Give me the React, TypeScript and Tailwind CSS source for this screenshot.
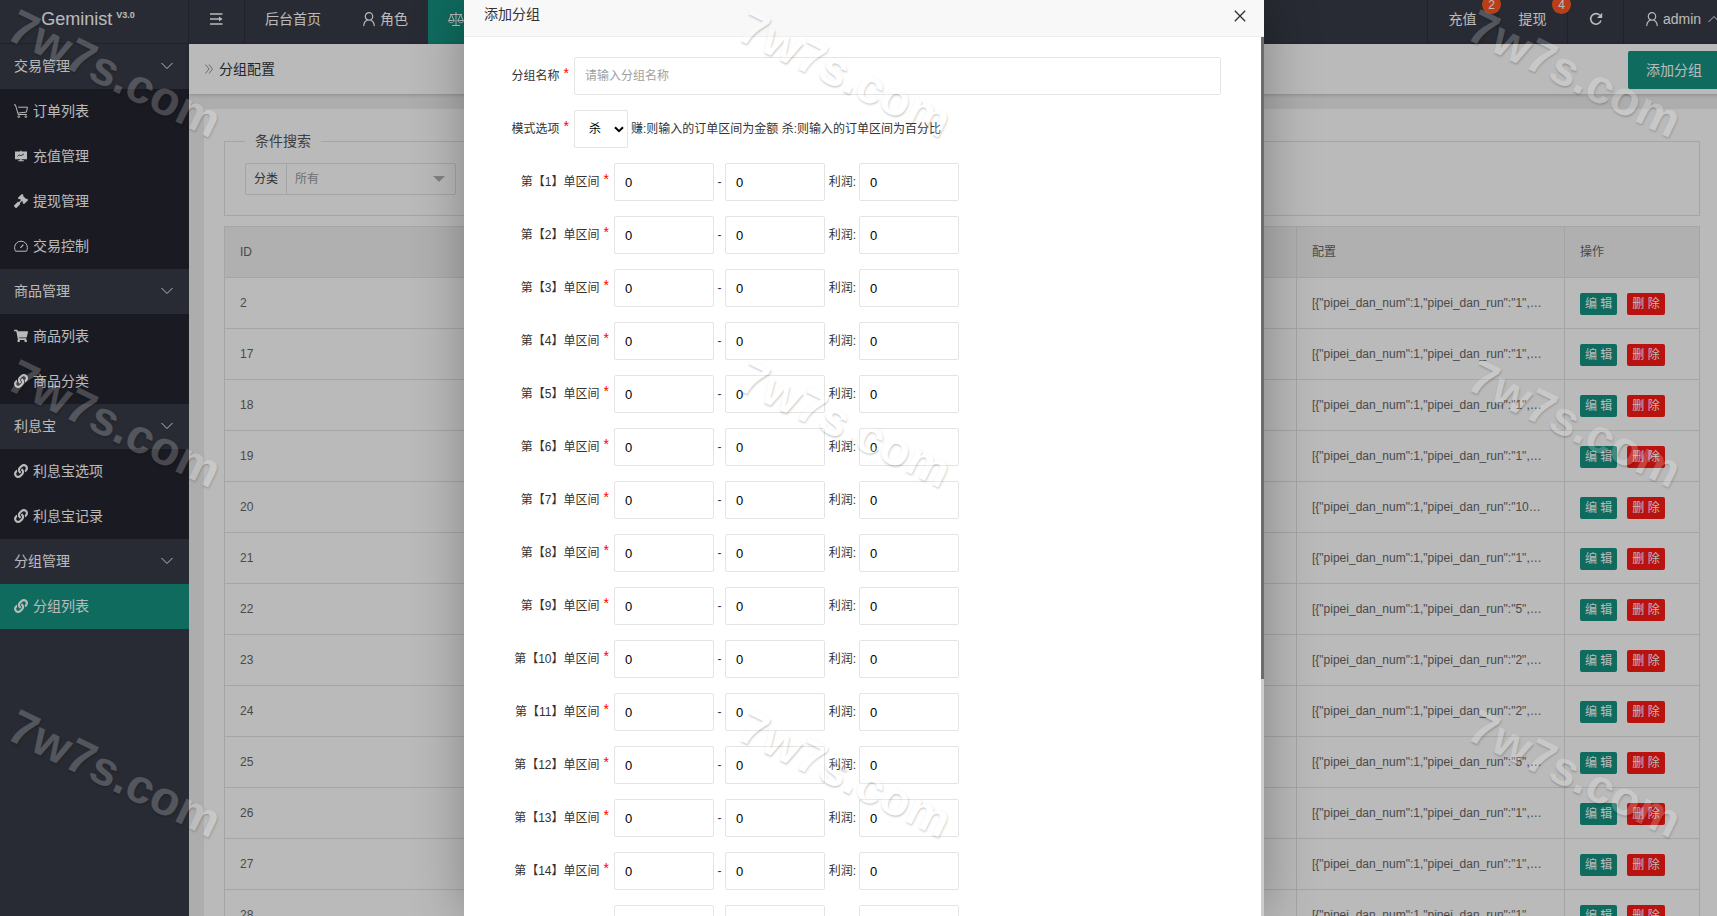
import { useState, type ReactNode } from 'react';
import { FaGavel, FaLink, FaShoppingCart } from 'react-icons/fa';

interface MenuItem {
  label: string;
  icon: ReactNode;
  active?: boolean;
}

interface MenuGroup {
  label: string;
  children: MenuItem[];
}

interface IconProps {
  className?: string;
}

const UserIcon = ({ className }: IconProps) => (
  <svg className={className} viewBox="0 0 16 16" fill="none" stroke="currentColor" strokeWidth="1.2">
    <circle cx="8" cy="5.4" r="3.7" />
    <path d="M2.8 14.6c0-3 1.6-4.6 3.4-5.6M13.2 14.6c0-3-1.6-4.6-3.4-5.6" strokeLinecap="round" />
  </svg>
);

const CartIcon = () => (
  <svg className="size-3.5" viewBox="0 0 14 14" fill="none" stroke="currentColor">
    <path d="M0 .8h1.400l2.800 9.700h8.600M4.200 3.200h9.300l-1.100 5-8 .8" />
    <circle cx="4.800" cy="12.600" r=".9" />
    <circle cx="11.800" cy="12.600" r=".9" />
  </svg>
);

const BoardIcon = () => (
  <svg className="size-3.5" viewBox="0 0 14 14" fill="currentColor">
    <path d="M1 2.600h5.300v-.8h1.400v.8H13v7.600H7.700v1h2.100v1H4.200v-1h2.100v-1H1z" />
    <path d="M3.400 7.200l2-1.300 1.600.8 3-1.700" fill="none" stroke="#24242f" strokeWidth=".8" />
  </svg>
);

const GaugeIcon = () => (
  <svg className="size-3.5" viewBox="0 0 14 14" fill="none" stroke="currentColor">
    <path d="M1.6 12.2C.8 11.2.6 10 .6 8.600a6.400 6.400 0 0 1 12.800 0c0 1.400-.2 2.600-1 3.600z" />
    <path d="M6.400 8.800l3-3.200" strokeWidth="1.200" />
  </svg>
);

const ScaleIcon = () => (
  <svg className="size-4" viewBox="0 0 16 16" fill="none" stroke="currentColor" strokeWidth="1">
    <path d="M8 1v13.500M4 14.500h8M2 3.500h12M3.400 3.500L.8 9.500M3.400 3.500L6 9.500M12.600 3.500L10 9.500M12.600 3.500l2.600 6" />
    <path d="M.6 9.500h5.600c-.2 1.500-1.200 2.200-2.800 2.200S.8 11 .6 9.500zM9.800 9.500h5.600c-.2 1.500-1.200 2.200-2.800 2.200s-2.600-.7-2.800-2.200z" />
  </svg>
);

const CollapseIcon = () => (
  <svg className="w-[13px] h-3" viewBox="0 0 13 12" fill="none" stroke="currentColor" strokeWidth="1.300">
    <path d="M0 1h12.500M0 6h10M0 11h12.500" />
    <path d="M9 3.600v4.800L12.600 6z" fill="currentColor" stroke="none" />
  </svg>
);

const RefreshIcon = () => (
  <svg className="size-3.5" viewBox="0 0 14 14" fill="none" stroke="currentColor" strokeWidth="1.600">
    <path d="M12 8.600A5.300 5.300 0 1 1 10.800 3.200" />
    <path d="M13.200.8v5.200H8z" fill="currentColor" stroke="none" />
  </svg>
);

const ChevronIcon = ({ className }: IconProps) => (
  <svg className={className} viewBox="0 0 12 8" fill="none" stroke="currentColor">
    <path d="M.5 1L6 6.500 11.500 1" />
  </svg>
);

const link = <FaLink className="size-3.5" />;

const menus: MenuGroup[] = [
  {
    label: '交易管理',
    children: [
      { label: '订单列表', icon: <CartIcon /> },
      { label: '充值管理', icon: <BoardIcon /> },
      { label: '提现管理', icon: <FaGavel className="size-3.5" /> },
      { label: '交易控制', icon: <GaugeIcon /> },
    ],
  },
  {
    label: '商品管理',
    children: [
      { label: '商品列表', icon: <FaShoppingCart className="size-3.5" /> },
      { label: '商品分类', icon: link },
    ],
  },
  {
    label: '利息宝',
    children: [
      { label: '利息宝选项', icon: link },
      { label: '利息宝记录', icon: link },
    ],
  },
  {
    label: '分组管理',
    children: [{ label: '分组列表', icon: link, active: true }],
  },
];

const rows = [
  { id: 2, config: '[{"pipei_dan_num":1,"pipei_dan_run":"1",…' },
  { id: 17, config: '[{"pipei_dan_num":1,"pipei_dan_run":"1",…' },
  { id: 18, config: '[{"pipei_dan_num":1,"pipei_dan_run":"1",…' },
  { id: 19, config: '[{"pipei_dan_num":1,"pipei_dan_run":"1",…' },
  { id: 20, config: '[{"pipei_dan_num":1,"pipei_dan_run":"10…' },
  { id: 21, config: '[{"pipei_dan_num":1,"pipei_dan_run":"1",…' },
  { id: 22, config: '[{"pipei_dan_num":1,"pipei_dan_run":"5",…' },
  { id: 23, config: '[{"pipei_dan_num":1,"pipei_dan_run":"2",…' },
  { id: 24, config: '[{"pipei_dan_num":1,"pipei_dan_run":"2",…' },
  { id: 25, config: '[{"pipei_dan_num":1,"pipei_dan_run":"5",…' },
  { id: 26, config: '[{"pipei_dan_num":1,"pipei_dan_run":"1",…' },
  { id: 27, config: '[{"pipei_dan_num":1,"pipei_dan_run":"1",…' },
  { id: 28, config: '[{"pipei_dan_num":1,"pipei_dan_run":"1",…' },
];

const intervals = Array.from({ length: 20 }, (_, i) => i + 1);

const Sidebar = () => (
  <aside className="w-[189px] shrink-0 bg-[#373b46] text-sm text-white">
    <div className="flex h-11 justify-center border-r border-b border-[#2c2f38] pr-3 pt-1.5 text-lg leading-[26px]">
      Geminist
      <sup className="ml-1 top-0 text-[9px] leading-[18px] font-bold">V3.0</sup>
    </div>
    <nav>
      {menus.map((group) => (
        <div key={group.label}>
          <button type="button" className="flex h-[45px] w-full items-center justify-between pb-0.5 pl-3.5 pr-4">
            {group.label}
            <ChevronIcon className="w-3 h-2" />
          </button>
          {group.children.map((item) => (
            <a
              key={item.label}
              href="#"
              className={`flex h-[45px] items-center gap-[5px] pb-0.5 pl-3.5 ${item.active ? 'bg-[#159382]' : 'bg-[#24242f]'}`}
            >
              {item.icon}
              {item.label}
            </a>
          ))}
        </div>
      ))}
    </nav>
  </aside>
);

const TopBar = () => (
  <header className="flex h-11 justify-between bg-[#373b46] text-sm text-white">
    <div className="flex">
      <button
        type="button"
        aria-label="菜单"
        className="flex w-14 items-center justify-center border-r border-[#2c2f38] pb-1.5"
      >
        <CollapseIcon />
      </button>
      <a href="#" className="flex items-center px-5 pb-1.5">
        后台首页
      </a>
      <a href="#" className="flex items-center gap-[3px] px-5 pb-1.5">
        <UserIcon className="size-4" />
        角色
      </a>
      <a href="#" className="flex items-center gap-[3px] bg-[#159382] px-5 pb-1.5">
        <ScaleIcon />
        交易
      </a>
    </div>
    <div className="flex">
      <a href="#" className="relative flex w-[70px] items-center justify-center border-l border-[#2c2f38] pb-1.5">
        充值
        <span className="absolute -top-[5px] -right-1 z-10 size-[19px] rounded-full bg-[#ff5722] text-center text-xs leading-5">
          2
        </span>
      </a>
      <a href="#" className="relative flex w-[70px] items-center justify-center border-l border-[#2c2f38] pb-1.5">
        提现
        <span className="absolute -top-[5px] -right-1 z-10 size-[19px] rounded-full bg-[#ff5722] text-center text-xs leading-5">
          4
        </span>
      </a>
      <button
        type="button"
        aria-label="刷新"
        className="flex w-14 items-center justify-center border-l border-[#2c2f38] pb-1.5"
      >
        <RefreshIcon />
      </button>
      <a href="#" className="flex w-28 items-center gap-[3px] border-l border-[#2c2f38] pl-5 pb-1.5">
        <UserIcon className="size-4" />
        admin
        <ChevronIcon className="ml-1 w-3 h-2 rotate-180" />
      </a>
    </div>
  </header>
);

const GroupTable = () => (
  <table className="mt-2.5 w-full table-fixed border-collapse text-left text-xs text-[#666]">
    <thead>
      <tr className="h-[51px] bg-[#f2f2f2]">
        <th className="border border-[#e2e2e2] px-[15px] font-normal">ID</th>
        <th className="border border-[#e2e2e2] px-[15px]" />
        <th className="w-[268px] border border-[#e2e2e2] px-[15px] font-normal">配置</th>
        <th className="w-[135px] border border-[#e2e2e2] px-[15px] font-normal">操作</th>
      </tr>
    </thead>
    <tbody>
      {rows.map((row) => (
        <tr key={row.id} className="h-[51px]">
          <td className="border border-[#e2e2e2] px-[15px]">{row.id}</td>
          <td className="border border-[#e2e2e2] px-[15px]" />
          <td className="truncate border border-[#e2e2e2] px-[15px]">{row.config}</td>
          <td className="border border-[#e2e2e2] px-[15px]">
            <div className="flex gap-2.5 pt-0.5 text-white">
              <button type="button" className="h-[22px] rounded-xs bg-[#159382] px-[5px]">
                编 辑
              </button>
              <button type="button" className="h-[22px] rounded-xs bg-[#ff1915] px-[5px]">
                删 除
              </button>
            </div>
          </td>
        </tr>
      ))}
    </tbody>
  </table>
);

const Required = () => <span className="ml-1 align-[2px] text-sm leading-none text-[#f00]">*</span>;

const numberInput =
  'h-[38px] w-[100px] rounded-xs border border-[#e4e4e4] bg-white px-2.5 text-[13px] text-black outline-none';

const AddGroupDialog = () => {
  const [mode, setMode] = useState('kill');

  return (
    <div
      role="dialog"
      aria-label="添加分组"
      className="flex h-full w-[800px] flex-col bg-white shadow-[1px_1px_50px_rgba(0,0,0,0.3)]"
    >
      <div className="flex h-[37px] shrink-0 items-center justify-between border-b border-[#eee] bg-[#f8f8f8] pb-2 pl-5 pr-[18px] text-sm text-[#333]">
        添加分组
        <button type="button" aria-label="关闭" className="pt-1">
          <svg className="size-3" viewBox="0 0 12 12" fill="none" stroke="#2d3036" strokeWidth="1.300">
            <path d="M.8.8l10.400 10.400M11.200.8L.8 11.200" />
          </svg>
        </button>
      </div>
      <div className="flex min-h-0 flex-1">
        <form className="flex min-w-0 flex-1 flex-col gap-[15px] overflow-hidden pt-5 pr-10 text-xs text-[#333]">
          <div className="flex shrink-0">
            <label htmlFor="group-name" className="h-[38px] w-[110px] pr-[5px] text-right leading-[38px]">
              分组名称
              <Required />
            </label>
            <input
              id="group-name"
              placeholder="请输入分组名称"
              className="h-[38px] flex-1 rounded-xs border border-[#e4e4e4] px-2.5 outline-none placeholder:text-[#a0a0a0]"
            />
          </div>
          <div className="flex shrink-0">
            <label htmlFor="group-mode" className="h-[38px] w-[110px] pr-[5px] text-right leading-[38px]">
              模式选项
              <Required />
            </label>
            <div className="relative">
              <select
                id="group-mode"
                value={mode}
                onChange={(e) => setMode(e.target.value)}
                className="h-[38px] w-[54px] appearance-none rounded-xs border border-[#e4e4e4] bg-white pl-3.5 text-black outline-none"
              >
                <option value="kill">杀</option>
                <option value="earn">赚</option>
              </select>
              <svg
                className="pointer-events-none absolute top-4 right-1 h-[7px] w-2.5"
                viewBox="0 0 10 7"
                fill="none"
                stroke="#000"
                strokeWidth="2"
              >
                <path d="M1 1.200l4 4 4-4" />
              </svg>
            </div>
            <span className="ml-[3px] leading-[38px]">赚:则输入的订单区间为金额 杀:则输入的订单区间为百分比</span>
          </div>
          {intervals.map((n) => (
            <div key={n} className="flex shrink-0">
              <label htmlFor={`start-${n}`} className="h-[38px] w-[150px] pr-[5px] text-right leading-[38px]">
                第【{n}】单区间
                <Required />
              </label>
              <div className="flex items-center gap-[3px]">
                <input id={`start-${n}`} defaultValue="0" className={numberInput} />
                <span className="w-[5px] text-center">-</span>
                <input aria-label="区间结束" defaultValue="0" className={numberInput} />
                <label htmlFor={`profit-${n}`} className="w-7 text-right">
                  利润:
                </label>
                <input id={`profit-${n}`} defaultValue="0" className={numberInput} />
              </div>
            </div>
          ))}
        </form>
        <div className="w-[3px] bg-[#ccc]">
          <div className="h-[73%] bg-[#6b6b6b]" />
        </div>
      </div>
    </div>
  );
};

const Watermark = () => (
  <div
    aria-hidden="true"
    className="pointer-events-none absolute inset-0 grid auto-rows-[350px] grid-cols-[repeat(3,730px)] items-start justify-items-start overflow-hidden pt-[50px]"
  >
    {Array.from({ length: 9 }, (_, i) => (
      <span
        key={i}
        className="rotate-26 text-5xl leading-none font-bold text-white opacity-20 [text-shadow:1px_1px_2px_#000]"
      >
        7w7s.com
      </span>
    ))}
  </div>
);

export default function App() {
  return (
    <div className="relative h-screen overflow-hidden font-['Liberation_Sans','Noto_Sans_CJK_SC',sans-serif]">
      {/* the page is a little wider than the window */}
      <div className="isolate flex h-full w-[calc(100%+18px)]">
        <Sidebar />
        <div className="flex min-w-0 flex-1 flex-col bg-[#eee]">
          <TopBar />
          <div className="z-0 flex h-[50px] shrink-0 items-center justify-between bg-white pl-4 pr-[15px] text-sm text-[#333] shadow-[0_1px_4px_rgba(0,0,0,0.2)]">
            <div className="flex items-center gap-1.5">
              <svg className="h-2.5 w-2" viewBox="0 0 8 10" fill="none" stroke="#777" strokeWidth=".8">
                <path d="M.5.5L4 5 .5 9.500M4 .5L7.500 5 4 9.500" />
              </svg>
              分组配置
            </div>
            <button type="button" className="mt-0.5 h-[38px] rounded-xs bg-[#159382] px-[18px] text-white">
              添加分组
            </button>
          </div>
          <main className="mt-[15px] mx-[15px] min-h-0 flex-1 overflow-hidden bg-white px-5 pt-[22px]">
            <fieldset className="border border-[#e2e2e2] px-5 pb-5">
              <legend className="px-2.5 text-sm text-[#555]">条件搜索</legend>
              <div className="mt-3 flex h-8 w-[211px] rounded-xs border border-[#e2e2e2] text-xs">
                <label htmlFor="category" className="w-[41px] border-r border-[#e2e2e2] text-center leading-[30px] text-[#444]">
                  分类
                </label>
                <div className="relative flex-1">
                  <select id="category" className="size-full appearance-none bg-transparent pl-2 text-[#999] outline-none">
                    <option>所有</option>
                  </select>
                  <svg className="pointer-events-none absolute top-3 right-2.5 h-1.5 w-3" viewBox="0 0 12 6" fill="#b4b4b4">
                    <path d="M0 0h12L6 6z" />
                  </svg>
                </div>
              </div>
            </fieldset>
            <GroupTable />
          </main>
        </div>
      </div>
      <div className="absolute inset-0 flex justify-center bg-black/27 pl-[11px]">
        <AddGroupDialog />
      </div>
      <Watermark />
    </div>
  );
}
